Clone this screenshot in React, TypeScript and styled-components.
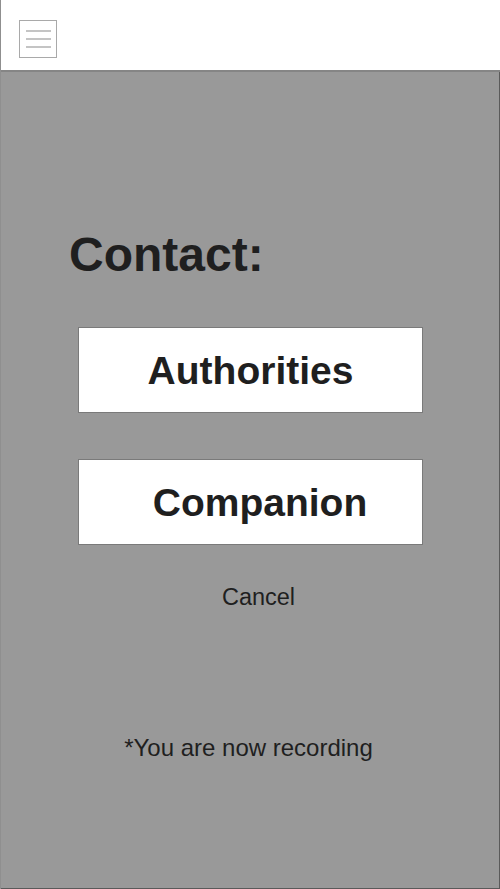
import React from "react";
import styled, { createGlobalStyle } from "styled-components";

const Global = createGlobalStyle`
  html, body { margin: 0; padding: 0; background: #ffffff; }
  body { font-family: "Liberation Sans", Arial, Helvetica, sans-serif; color: #1f1f1f; }
  * { box-sizing: border-box; }
`;

const Frame = styled.div`
  width: 500px;
  height: 889px;
  display: flex;
  flex-direction: column;
  border-left: 1px solid #8f8f8f;
`;

const Header = styled.header`
  height: 72px;
  flex: none;
  background: #ffffff;
  border-bottom: 2px solid #858585;
  padding: 20px 0 0 18px;
`;

const MenuButton = styled.button`
  width: 38px;
  height: 38px;
  padding: 0;
  margin: 0;
  background: #ffffff;
  border: 1px solid #a9a9a9;
  display: flex;
  flex-direction: column;
  align-items: center;
  justify-content: center;
  gap: 6px;
  cursor: pointer;
`;

const MenuLine = styled.span`
  display: block;
  width: 25px;
  height: 2px;
  background: #c4c4c4;
`;

const Main = styled.main`
  flex: 1;
  background: #999999;
  border-right: 1px solid #5a5a5a;
  border-bottom: 1px solid #5a5a5a;
  padding-top: 159px;
  display: flex;
  flex-direction: column;
`;

const Heading = styled.h1`
  margin: 0 0 48px 68px;
  font-size: 48px;
  line-height: 48px;
  font-weight: 700;
  color: #1f1f1f;
`;

const ButtonList = styled.div`
  display: flex;
  flex-direction: column;
  gap: 46px;
  padding-left: 77px;
`;

const ChoiceButton = styled.button<{ $shift: number }>`
  width: 345px;
  height: 86px;
  margin: 0;
  padding: 0 0 0 ${(p) => p.$shift}px;
  background: #ffffff;
  border: 1px solid #7a7a7a;
  display: flex;
  align-items: center;
  justify-content: center;
  font-family: "Liberation Sans", Arial, Helvetica, sans-serif;
  font-size: 39px;
  line-height: 39px;
  font-weight: 700;
  color: #1f1f1f;
  cursor: pointer;
`;

const TextAction = styled.button`
  align-self: stretch;
  margin: 41px 0 0 0;
  padding: 0 0 0 17px;
  background: none;
  border: none;
  text-align: center;
  font-family: "Liberation Sans", Arial, Helvetica, sans-serif;
  font-size: 23.5px;
  line-height: 23px;
  font-weight: 400;
  color: #1f1f1f;
  cursor: pointer;
`;

const Notice = styled.p`
  margin: 127px 0 0 0;
  padding-right: 3px;
  text-align: center;
  font-size: 24px;
  line-height: 24px;
  font-weight: 400;
  color: #1f1f1f;
`;

export default function App() {
  return (
    <>
      <Global />
      <Frame>
        <Header>
          <MenuButton aria-label="Menu">
            <MenuLine />
            <MenuLine />
            <MenuLine />
          </MenuButton>
        </Header>
        <Main>
          <Heading>Contact:</Heading>
          <ButtonList>
            <ChoiceButton $shift={0}>Authorities</ChoiceButton>
            <ChoiceButton $shift={19}>Companion</ChoiceButton>
          </ButtonList>
          <TextAction>Cancel</TextAction>
          <Notice>*You are now recording</Notice>
        </Main>
      </Frame>
    </>
  );
}
